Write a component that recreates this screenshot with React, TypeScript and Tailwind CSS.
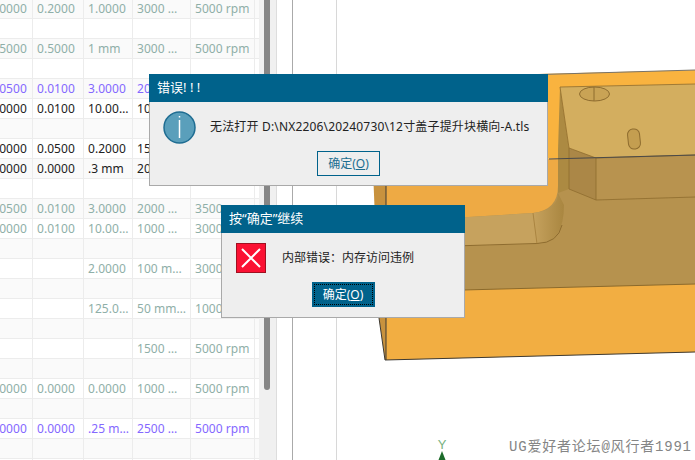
import type { ReactNode } from "react";

type Tone = "gray" | "purple" | "black" | "none";
type RowData = { tone: Tone; cells?: string[] };

const rows: RowData[] = [
  { tone: "gray", cells: ["0.0000", "0.2000", "1.0000", "3000 …", "5000 rpm"] },
  { tone: "none" },
  { tone: "gray", cells: ["0.5000", "0.5000", "1 mm", "3000 …", "5000 rpm"] },
  { tone: "none" },
  { tone: "purple", cells: ["0.0500", "0.0100", "3.0000", "2000 …", "3500 rpm"] },
  { tone: "black", cells: ["0.0000", "0.0100", "10.00…", "1000 …", "3000 rpm"] },
  { tone: "none" },
  { tone: "black", cells: ["0.0000", "0.0500", "0.2000", "1500 …", "4000 rpm"] },
  { tone: "black", cells: ["0.0000", "0.0000", ".3 mm", "2000 …", "4000 rpm"] },
  { tone: "none" },
  { tone: "gray", cells: ["0.0500", "0.0100", "3.0000", "2000 …", "3500 rpm"] },
  { tone: "gray", cells: ["0.0000", "0.0100", "10.00…", "1000 …", "3000 rpm"] },
  { tone: "none" },
  { tone: "gray", cells: ["", "", "2.0000", "100 m…", "3000 rpm"] },
  { tone: "none" },
  { tone: "gray", cells: ["", "", "125.0…", "50 mm…", "1000 rpm"] },
  { tone: "none" },
  { tone: "gray", cells: ["", "", "", "1500 …", "5000 rpm"] },
  { tone: "none" },
  { tone: "gray", cells: ["0.0000", "0.0000", "0.0000", "1000 …", "5000 rpm"] },
  { tone: "none" },
  { tone: "purple", cells: ["0.0000", "0.0000", ".25 m…", "2500 …", "5000 rpm"] },
  { tone: "none" },
  { tone: "none" },
];

const toneClass: Record<Tone, string> = {
  gray: "text-[#8fafa8]",
  purple: "text-[#8468ff]",
  black: "text-[#222222]",
  none: "",
};

function Row({ row, index }: { row: RowData; index: number }) {
  const cells = row.cells ?? ["", "", "", "", ""];
  return (
    <div
      className={`grid h-5 shrink-0 grid-cols-[48px_51px_49px_58px_64px_3px] border-b border-[#ececec] text-[12px] leading-[19px] tracking-[0.05px] ${
        index % 2 === 0 ? "bg-[#fafafa]" : "bg-white"
      } ${toneClass[row.tone]}`}
    >
      {cells.map((text, i) => (
        <div key={i} className="overflow-hidden border-r border-[#ececec] pl-1 whitespace-nowrap">
          {text}
        </div>
      ))}
      <div />
    </div>
  );
}

function ParamTable() {
  return (
    <div className="h-[460px] w-[259px] shrink-0 overflow-hidden">
      <div className="mt-[-1px] ml-[-15px] flex w-[274px] flex-col">
        {rows.map((row, i) => (
          <Row key={i} row={row} index={i} />
        ))}
      </div>
    </div>
  );
}

function ModelView() {
  return (
    <svg className="h-[460px] w-[358px]" viewBox="337 0 358 460">
      <defs>
        <linearGradient id="fillet" x1="0" y1="0" x2="1" y2="0">
          <stop offset="0" stopColor="#c6a25e" />
          <stop offset="1" stopColor="#a98640" />
        </linearGradient>
      </defs>
      {/* left chamfer */}
      <polygon points="373,170 387,170 386,360 385,360 379,318" fill="#c8923e" />
      {/* main orange faces */}
      <polygon points="386,78 695,70 695,155 386,163" fill="#f9b33f" />
      <polygon points="386,163 695,155 695,352 386,360" fill="#eeaa44" />
      <polygon points="386,292 695,284 695,352 386,360" fill="#f2ae42" />
      <path d="M386 76 L540 74.5 L695 70" fill="none" stroke="#77736a" strokeWidth="1" />
      <path d="M385 360 L695 352" fill="none" stroke="#3d3a34" strokeWidth="1" />
      <path d="M386 170 L386 360 M379 318 L385 360" fill="none" stroke="#3d3a34" strokeWidth="1" />
      {/* recessed pocket */}
      <path d="M386 222 L533 213 Q558 210 558 186 L558 150 L695 150 L695 284 L386 292 Z" fill="#b6924e" />
      <polygon points="386,222 533,213 537,244 386,248" fill="#c6a25e" />
      <path d="M533 213 Q558 210 558 193 L564 205 Q564 243 537 244 Z" fill="url(#fillet)" />
      <path d="M386 248 L537 243.5 Q558 243 562 225" fill="none" stroke="#8e6c2f" strokeWidth="1" />
      <path d="M533 213 L537 244" fill="none" stroke="#a07a36" strokeWidth="0.7" />
      <path d="M386 292 L695 284" fill="none" stroke="#8b6a2c" strokeWidth="1" />
      {/* raised block */}
      <polygon points="560,87 558,150 558,193 569,189 569,148" fill="#ac8a42" />
      <polygon points="569,148 596,158 596,200 569,189" fill="#ab8747" />
      <polygon points="596,159 695,155 695,197 596,200" fill="#b8934f" />
      <polygon points="560,87 695,84 695,155 596,158 569,148" fill="#d3ae5f" />
      <path d="M560 87 L695 84 M560 87 L569 148 L596 158 L695 155 M596 158 L596 200 L695 197 M596 200 L569 189 L569 148" fill="none" stroke="#8e6c2f" strokeWidth="0.8" />
      <path d="M549 159 L695 155" fill="none" stroke="#4a4a4a" strokeWidth="1" />
      {/* holes */}
      <ellipse cx="594.5" cy="94" rx="15" ry="7" fill="#c9a355" stroke="#8e6c2f" strokeWidth="1" />
      <path d="M594 87 L594 101" stroke="#8e6c2f" strokeWidth="1" />
      <rect x="628" y="129" width="12" height="20" rx="5.5" fill="#c49e50" stroke="#8e6c2f" strokeWidth="1" transform="rotate(-6 634 139)" />
      {/* axis triad */}
      <text x="442" y="449" textAnchor="middle" fontSize="13" fontFamily="Liberation Sans" fill="#79b27f">
        Y
      </text>
      <polygon points="442,451 438.5,460 445.5,460" fill="#1c6b2a" />
    </svg>
  );
}

function DialogButton({ focused, children }: { focused?: boolean; children: ReactNode }) {
  return (
    <button
      className={
        focused
          ? "flex h-[25px] w-[63px] items-center justify-center bg-[#00628b] p-[2px] text-white"
          : "flex h-[25px] w-[63px] items-center justify-center border border-[#00628b] text-[#1c6d90]"
      }
    >
      <span className={focused ? "flex h-full w-full items-center justify-center border border-dotted border-black" : ""}>
        {children}
      </span>
    </button>
  );
}

function Dialog({
  title,
  className,
  children,
}: {
  title: string;
  className: string;
  children: ReactNode;
}) {
  return (
    <div className={`absolute flex flex-col border-x border-b border-[#a9a9a9] bg-[#eeeeee] ${className}`}>
      <div className="mx-[-1px] flex h-7 shrink-0 items-center bg-[#00628b] pl-2 text-[13px] text-white">{title}</div>
      {children}
    </div>
  );
}

export default function App() {
  return (
    <div className="relative flex h-[460px] w-[695px] overflow-hidden bg-white font-['Noto_Sans','Noto_Sans_CJK_SC',sans-serif]">
      <ParamTable />
      {/* scrollbar */}
      <div className="h-full w-[18px] shrink-0 border-r border-[#dddddd] bg-[#f0f0f0] pl-[5px]">
        <div className="h-[390px] w-[6px] rounded-b-[3px] bg-[#868686]" />
      </div>
      <div className="h-full w-[16px] shrink-0 border-r border-[#aaaaaa]" />
      <div className="h-full w-[44px] shrink-0 border-r border-[#d8d8d8]" />
      <ModelView />

      <Dialog title="错误! ! !" className="top-[74px] left-[149px] h-[112px] w-[399px]">
        <div className="flex h-[49px] items-center pt-[2px] pl-[13px]">
          <svg className="h-[33px] w-[33px] shrink-0" viewBox="0 0 33 33">
            <circle cx="16.5" cy="16.5" r="15.5" fill="#5a9fbb" stroke="#1f6d92" strokeWidth="1.5" />
            <path d="M16.5 9 L16.5 27" stroke="white" strokeWidth="1.5" />
            <path d="M16.5 5 L16.5 6.5" stroke="white" strokeWidth="1.5" />
          </svg>
          <span className="mt-[-1px] ml-[14px] text-[12px] tracking-[0.17px] whitespace-nowrap text-[#222222]">
            无法打开 D:\NX2206\20240730\12寸盖子提升块横向-A.tls
          </span>
        </div>
        <div className="flex justify-center text-[12px]">
          <DialogButton>
            确定(<span className="underline">O</span>)
          </DialogButton>
        </div>
      </Dialog>

      <Dialog title="按“确定”继续" className="top-[205px] left-[221px] h-[113px] w-[244px]">
        <div className="flex h-[49px] items-center pl-[14px]">
          <svg className="h-[30px] w-[30px] shrink-0" viewBox="0 0 30 30">
            <rect x="0.5" y="0.5" width="29" height="29" fill="#fb1133" stroke="#a01020" />
            <path d="M6 6 L24 24 M24 6 L6 24" stroke="white" strokeWidth="2" />
          </svg>
          <span className="mt-[1px] ml-4 text-[12px] whitespace-nowrap text-[#222222]">内部错误：内存访问违例</span>
        </div>
        <div className="flex justify-center text-[12px]">
          <DialogButton focused>
            确定(<span className="underline">O</span>)
          </DialogButton>
        </div>
      </Dialog>

      <div className="absolute top-[438px] left-[509px] font-['Liberation_Mono','Noto_Sans_CJK_SC',monospace] text-[14px] leading-[18px] tracking-[0.8px] whitespace-nowrap text-[#858585]">
        UG爱好者论坛@风行者1991
      </div>
    </div>
  );
}
